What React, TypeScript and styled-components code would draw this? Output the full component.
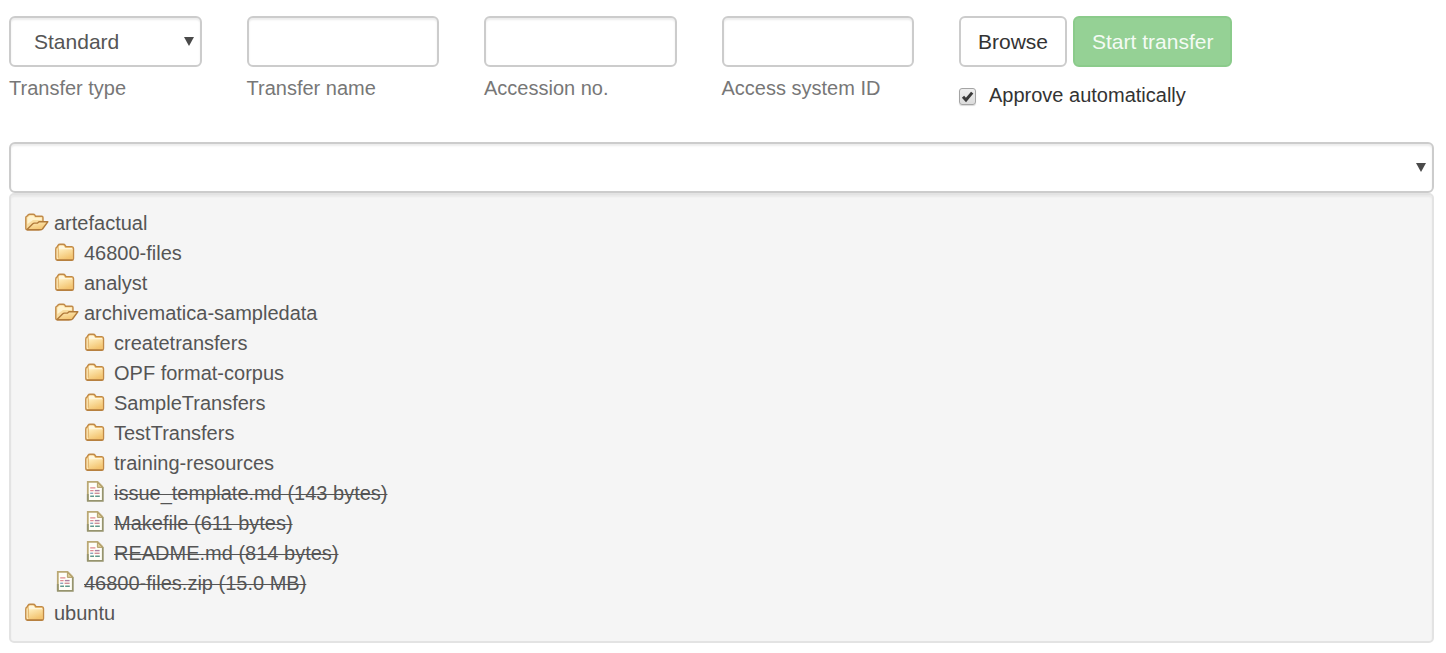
import React, { useState } from "react";
import styled, { createGlobalStyle, css } from "styled-components";

const GlobalStyle = createGlobalStyle`
  *, *::before, *::after { box-sizing: border-box; }
  body {
    margin: 0;
    background: #fff;
    color: #333;
    font-family: "Liberation Sans", Arial, sans-serif;
    font-size: 20px;
    line-height: 30px;
  }
`;

const Page = styled.main`
  padding: 16px 12px 10px 9px;
`;

const TransferForm = styled.form`
  display: grid;
  grid-template-columns: repeat(6, minmax(0, 1fr));
`;

const Field = styled.div`
  display: flex;
  flex-direction: column;
  gap: 6px;
  padding-right: 45px;
`;

const Caption = styled.label`
  color: #777;
`;

const controlStyle = css`
  display: block;
  width: 100%;
  height: 51px;
  margin: 0;
  border: 2px solid #ccc;
  border-radius: 6px;
  background: #fff;
  box-shadow: inset 0 2px 2px rgba(0, 0, 0, 0.08);
  color: #555;
  font-family: inherit;
  font-size: 21px;
`;

const TextInput = styled.input`
  ${controlStyle}
  padding: 0 16px;
`;

const SelectBox = styled.div`
  position: relative;
`;

const Select = styled.select`
  ${controlStyle}
  appearance: none;
  padding: 0 23px;
`;

const Arrow = styled.svg`
  position: absolute;
  top: 21px;
  right: 8px;
  pointer-events: none;
`;

const Actions = styled.div`
  grid-column: span 2;
`;

const ButtonRow = styled.div`
  display: flex;
  gap: 6px;
`;

const Button = styled.button<{ $primary?: boolean }>`
  height: 51px;
  padding: 0 17px;
  border: 2px solid ${(p) => (p.$primary ? "#8bcb8b" : "#ccc")};
  border-radius: 6px;
  background: ${(p) => (p.$primary ? "#95d195" : "#fff")};
  color: ${(p) => (p.$primary ? "#f4fbf4" : "#333")};
  font-family: inherit;
  font-size: 21px;
  white-space: nowrap;
`;

const Approve = styled.label`
  display: flex;
  align-items: center;
  gap: 13px;
  margin-top: 13px;
`;

const CheckHolder = styled.span`
  position: relative;
  display: flex;
  padding-top: 2px;
`;

const Checkbox = styled.input`
  appearance: none;
  width: 17px;
  height: 17px;
  margin: 0;
  border: 1px solid #a4a4a4;
  border-radius: 3px;
  background: linear-gradient(#eee, #dcdcdc);
  box-shadow: 0 1px 1px rgba(0, 0, 0, 0.15);

  & + svg { visibility: hidden; }
  &:checked + svg { visibility: visible; }
`;

const Tick = styled.svg`
  position: absolute;
  top: 2px;
  left: 0;
  pointer-events: none;
`;

const Source = styled.section`
  margin-top: 32px;
`;

const Panel = styled.div`
  padding: 13px 14px;
  border: 2px solid #e3e3e3;
  border-radius: 5px;
  background: #f5f5f5;
  box-shadow: inset 0 2px 2px rgba(0, 0, 0, 0.05);
`;

const Branch = styled.ul<{ $nested?: boolean }>`
  margin: 0;
  padding: 0 0 0 ${(p) => (p.$nested ? 30 : 0)}px;
  list-style: none;
`;

const rowStyle = css`
  display: flex;
  gap: 5px;
  height: 30px;
  color: #555;
  white-space: nowrap;
`;

const FolderRow = styled.button`
  ${rowStyle}
  padding: 0;
  border: 0;
  background: none;
  font: inherit;
  text-align: left;
  cursor: pointer;
`;

const FileRow = styled.div`
  ${rowStyle}

  span { text-decoration: line-through 1px; }
`;

const Icon = styled.svg`
  flex: none;
  margin-top: 3px;
`;

function DownArrow() {
  return (
    <Arrow width="10" height="9" viewBox="0 0 10 9" aria-hidden="true">
      <path d="M0 0h10L5 9z" fill="#4a4a4a" />
    </Arrow>
  );
}

function ClosedFolder() {
  return (
    <Icon width="24" height="24" viewBox="0 0 24 24" aria-hidden="true">
      <path d="M0.8 8Q0.8 6.4 2.2 5.8L3 4.4Q3.6 3.3 5 3.3H8.2Q9.6 3.3 10.2 4.3L11 5.6H16.8Q18.5 5.6 18.5 7.4V17.4Q18.5 19.2 16.8 19.2H2.8Q0.8 19.2 0.8 17.2z" fill="#f0c67c" stroke="#c18a48" strokeWidth="1.4" />
      <path d="M3.8 8V5.6Q4.2 4.6 5.2 4.6H8Q8.8 4.6 9.2 5.4L10.1 7H16.4Q17.4 7 17.4 8V9H3.8z" fill="#fff6dc" />
      <path d="M3.8 8.2H17.6V17Q17.6 18 16.6 18H3.8z" fill="url(#folder-face)" />
      <path d="M2.2 7.6V16.6Q2.2 17.6 3.2 17.8" fill="none" stroke="#fdeabf" strokeWidth="1.2" />
      <path d="M3.4 7.6V16.6" fill="none" stroke="#dcae69" strokeWidth="0.7" />
      <path d="M1.8 19H17.6" stroke="#b17a3a" strokeWidth="1.2" />
    </Icon>
  );
}

function OpenFolder() {
  return (
    <Icon width="24" height="24" viewBox="0 0 24 24" aria-hidden="true">
      <path d="M0.8 17.5V6.6Q0.8 5.6 2 5.2L3 4Q3.7 3.3 4.8 3.3H8.2Q9.3 3.3 9.9 4.2L10.6 5.3H16.8Q18 5.3 18 6.6V11.2L14 18.8H2.4Q0.8 18.8 0.8 17.5z" fill="#f9dda0" stroke="#c18a48" strokeWidth="1.4" />
      <path d="M2.4 13V6.7L4.8 4.7H8.3L9.8 6.8H16.7V9H8z" fill="#fff3cf" />
      <path d="M2 18.6L7.6 12.9Q8.4 12.1 9.5 12.1H12.6L14 10.8H22.8L17.5 18Q17 18.8 16 18.8H2.2z" fill="url(#folder-face)" stroke="#b17a3a" strokeWidth="1.4" strokeLinejoin="round" />
    </Icon>
  );
}

function FileIcon() {
  return (
    <Icon width="24" height="24" viewBox="0 0 24 24" aria-hidden="true">
      <path d="M2.8 0.9H12.6L17.8 6.2V19.8H2.8z" fill="#fffef8" />
      <path d="M2.8 19.8V0.9H12.6L17.8 6.2" fill="none" stroke="#baa873" strokeWidth="1.8" />
      <path d="M17.8 6V19.8H2.8V13" fill="none" stroke="#96946e" strokeWidth="1.8" />
      <path d="M12.4 1.4V6.4H17.4z" fill="#dccb98" stroke="#b3a06a" strokeWidth="1" />
      <g fill="none" strokeWidth="1.4">
        <path d="M5.2 6.9H10.4M5.2 9.6H8.6" stroke="#e08a90" />
        <path d="M9.8 9.6H14.6" stroke="#a880a0" />
        <path d="M9.6 12.3H14.6" stroke="#cf8f96" />
        <path d="M5.2 12.3H8.2" stroke="#8ca4bd" />
        <path d="M5.2 15.2H9M10.2 15.2H14.8" stroke="#5f988c" />
      </g>
    </Icon>
  );
}

type TreeNode = { name: string; kind: "folder" | "file"; open?: boolean; children?: TreeNode[] };

const folder = (name: string, children?: TreeNode[]): TreeNode => ({
  name,
  kind: "folder",
  open: Boolean(children),
  children,
});
const file = (name: string): TreeNode => ({ name, kind: "file" });

const tree: TreeNode[] = [
  folder("artefactual", [
    folder("46800-files"),
    folder("analyst"),
    folder("archivematica-sampledata", [
      folder("createtransfers"),
      folder("OPF format-corpus"),
      folder("SampleTransfers"),
      folder("TestTransfers"),
      folder("training-resources"),
      file("issue_template.md (143 bytes)"),
      file("Makefile (611 bytes)"),
      file("README.md (814 bytes)"),
    ]),
    file("46800-files.zip (15.0 MB)"),
  ]),
  folder("ubuntu"),
];

function TreeItem({ node }: { node: TreeNode }) {
  const [open, setOpen] = useState(Boolean(node.open));
  if (node.kind === "file") {
    return (
      <li>
        <FileRow>
          <FileIcon />
          <span>{node.name}</span>
        </FileRow>
      </li>
    );
  }
  return (
    <li>
      <FolderRow type="button" aria-expanded={open} onClick={() => setOpen(!open)}>
        {open ? <OpenFolder /> : <ClosedFolder />}
        <span>{node.name}</span>
      </FolderRow>
      {open && node.children && (
        <Branch $nested>
          {node.children.map((child) => (
            <TreeItem key={child.name} node={child} />
          ))}
        </Branch>
      )}
    </li>
  );
}

const GradientDefs = styled.svg`
  display: block;
`;

const textFields = [
  { id: "transfer-name", label: "Transfer name" },
  { id: "accession-no", label: "Accession no." },
  { id: "access-system-id", label: "Access system ID" },
];

export default function App() {
  return (
    <Page>
      <GlobalStyle />
      <GradientDefs width="0" height="0" aria-hidden="true">
        <defs>
          <linearGradient id="folder-face" x1="0" y1="0" x2="0.5" y2="1">
            <stop offset="0" stopColor="#ffeebd" />
            <stop offset="1" stopColor="#f3c470" />
          </linearGradient>
        </defs>
      </GradientDefs>
      <TransferForm onSubmit={(e) => e.preventDefault()}>
        <Field>
          <SelectBox>
            <Select id="transfer-type" defaultValue="standard">
              <option value="standard">Standard</option>
            </Select>
            <DownArrow />
          </SelectBox>
          <Caption htmlFor="transfer-type">Transfer type</Caption>
        </Field>
        {textFields.map((field) => (
          <Field key={field.id}>
            <TextInput id={field.id} type="text" />
            <Caption htmlFor={field.id}>{field.label}</Caption>
          </Field>
        ))}
        <Actions>
          <ButtonRow>
            <Button type="button">Browse</Button>
            <Button type="submit" disabled $primary>
              Start transfer
            </Button>
          </ButtonRow>
          <Approve>
            <CheckHolder>
              <Checkbox type="checkbox" defaultChecked />
              <Tick width="17" height="17" viewBox="0 0 17 17" aria-hidden="true">
                <path d="M4 8.7L7 12L13.2 4.6" fill="none" stroke="#3a3a3a" strokeWidth="3" />
              </Tick>
            </CheckHolder>
            Approve automatically
          </Approve>
        </Actions>
      </TransferForm>
      <Source>
        <SelectBox>
          <Select aria-label="Transfer source location" defaultValue="">
            <option value="" />
          </Select>
          <DownArrow />
        </SelectBox>
        <Panel>
          <Branch>
            {tree.map((node) => (
              <TreeItem key={node.name} node={node} />
            ))}
          </Branch>
        </Panel>
      </Source>
    </Page>
  );
}
